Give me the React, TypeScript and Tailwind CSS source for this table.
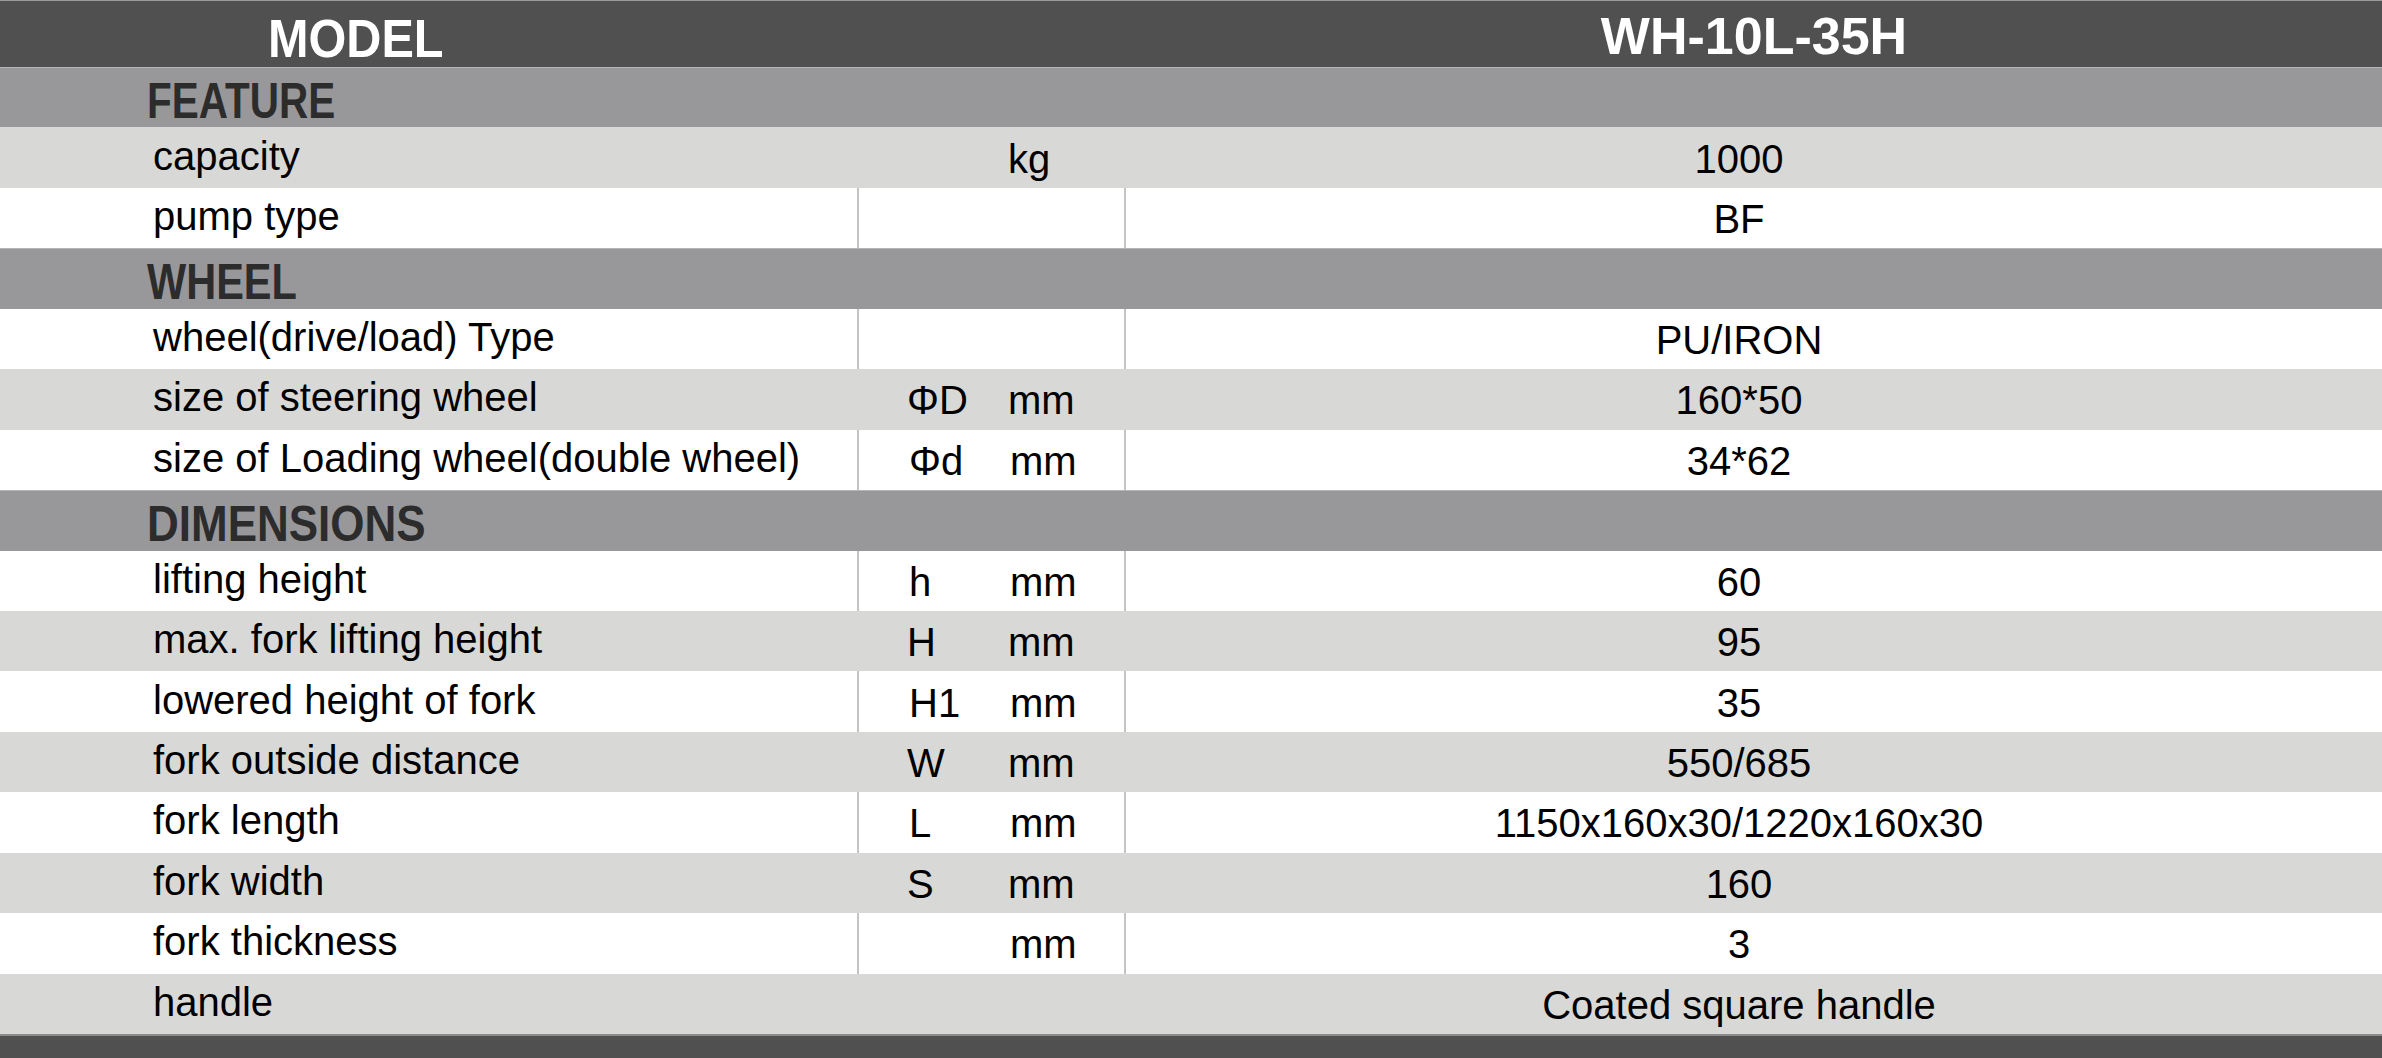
import React from 'react';

type Row =
  | { kind: 'section'; title: string; fit: string }
  | { kind: 'spec'; label: string; sym?: string; unit?: string; value: string; shaded?: boolean };

// the headings use a narrow geometric face in the original; squeeze Arial to match each width
const rows: Row[] = [
  { kind: 'section', title: 'FEATURE', fit: 'scale-x-[0.81]' },
  { kind: 'spec', label: 'capacity', unit: 'kg', value: '1000', shaded: true },
  { kind: 'spec', label: 'pump type', value: 'BF' },
  { kind: 'section', title: 'WHEEL', fit: 'scale-x-[0.83]' },
  { kind: 'spec', label: 'wheel(drive/load) Type', value: 'PU/IRON' },
  { kind: 'spec', label: 'size of steering wheel', sym: 'ΦD', unit: 'mm', value: '160*50', shaded: true },
  { kind: 'spec', label: 'size of Loading wheel(double wheel)', sym: 'Φd', unit: 'mm', value: '34*62' },
  { kind: 'section', title: 'DIMENSIONS', fit: 'scale-x-[0.88]' },
  { kind: 'spec', label: 'lifting height', sym: 'h', unit: 'mm', value: '60' },
  { kind: 'spec', label: 'max. fork lifting height', sym: 'H', unit: 'mm', value: '95', shaded: true },
  { kind: 'spec', label: 'lowered height of fork', sym: 'H1', unit: 'mm', value: '35' },
  { kind: 'spec', label: 'fork outside distance', sym: 'W', unit: 'mm', value: '550/685', shaded: true },
  { kind: 'spec', label: 'fork length', sym: 'L', unit: 'mm', value: '1150x160x30/1220x160x30' },
  { kind: 'spec', label: 'fork width', sym: 'S', unit: 'mm', value: '160', shaded: true },
  { kind: 'spec', label: 'fork thickness', unit: 'mm', value: '3' },
  { kind: 'spec', label: 'handle', value: 'Coated square handle', shaded: true },
];

const SectionRow: React.FC<{ title: string; fit: string }> = ({ title, fit }) => (
  <div className="h-[60.44px] shrink-0 flex items-center bg-[#98989a] border-t border-[#b4b4b4] pl-[147px]">
    <span
      className={`inline-block origin-left ${fit} translate-y-[3px] text-[50px] leading-none font-bold text-[#2c2c2c]`}
    >
      {title}
    </span>
  </div>
);

const SpecRow: React.FC<{ label: string; sym?: string; unit?: string; value: string; shaded?: boolean }> = ({
  label,
  sym,
  unit,
  value,
  shaded,
}) => (
  <div
    className={`h-[60.44px] shrink-0 grid grid-cols-[857px_269px_1fr] text-[40px] leading-none text-black ${
      shaded ? 'bg-[#d8d8d6]' : 'bg-white'
    }`}
  >
    <div className="flex items-center pl-[153px] pb-[4px] whitespace-nowrap">{label}</div>
    <div
      className={`flex items-center pl-[50px] pt-[2px] ${
        shaded ? '' : 'border-l-2 border-r-2 border-[#c4c4c4]'
      }`}
    >
      <span className="w-[101px]">{sym}</span>
      <span>{unit}</span>
    </div>
    <div className="flex items-center justify-center pr-[30px] pt-[2px] whitespace-nowrap">{value}</div>
  </div>
);

export default function App() {
  return (
    <div className="w-[2382px] h-[1058px] flex flex-col bg-white font-['Liberation_Sans',Arial,sans-serif] overflow-hidden">
      <div className="h-[67px] shrink-0 grid grid-cols-[1126px_1fr] bg-[#505050] border-t border-[#9a9a9a] text-white font-bold">
        <div className="flex items-center pl-[268px] pt-[8px]">
          <span className="inline-block origin-left scale-x-[0.9] text-[54px] leading-none">MODEL</span>
        </div>
        <div className="flex items-center justify-center pt-[3px] text-[52px] leading-none">WH-10L-35H</div>
      </div>

      <div className="flex flex-col">
        {rows.map((r, i) =>
          r.kind === 'section' ? (
            <SectionRow key={i} title={r.title} fit={r.fit} />
          ) : (
            <SpecRow key={i} label={r.label} sym={r.sym} unit={r.unit} value={r.value} shaded={r.shaded} />
          )
        )}
      </div>

      <div className="flex-1 bg-[#505050] border-t-2 border-[#8a8a8a]" />
    </div>
  );
}
